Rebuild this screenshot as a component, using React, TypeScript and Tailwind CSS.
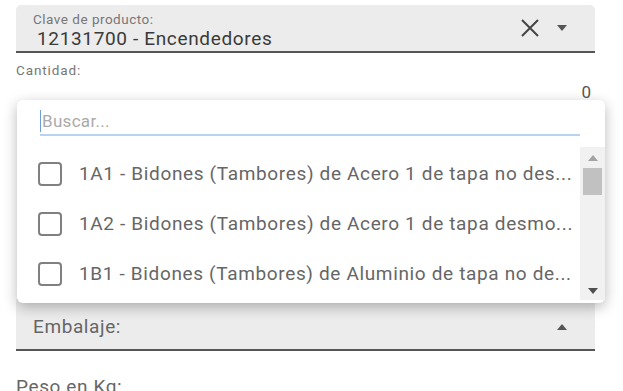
import React from 'react';

const items = [
  '1A1 - Bidones (Tambores) de Acero 1 de tapa no des...',
  '1A2 - Bidones (Tambores) de Acero 1 de tapa desmo...',
  '1B1 - Bidones (Tambores) de Aluminio de tapa no de...',
];

function Caret({ up = false }: { up?: boolean }) {
  return (
    <svg width="10" height="6" viewBox="0 0 10 6" className="block">
      {up ? <path d="M0 6 L5 0 L10 6 Z" fill="#555" /> : <path d="M0 0 L10 0 L5 6 Z" fill="#555" />}
    </svg>
  );
}

export default function App() {
  return (
    <div className="relative w-[623px] h-[391px] overflow-hidden bg-white font-['Roboto',sans-serif]">
      <div className="pl-4 pr-[28px] pt-[5px]">
        {/* Clave de producto */}
        <div className="h-[48px] bg-[#ececec] rounded-t-[5px] border-b-2 border-[#555] flex items-center pl-[17px] pr-[28px]">
          <div className="flex-1 flex flex-col pt-[5px]">
            <span className="text-[13.5px] leading-[16px] tracking-[0.5px] text-[#777]">Clave de producto:</span>
            <span className="text-[19px] leading-[22px] tracking-[0.65px] text-[#3a3a3a] pl-[4px] mt-[1px]">12131700 - Encendedores</span>
          </div>
          <svg width="20" height="20" viewBox="0 0 20 20" className="mr-[17px]">
            <path d="M2 2 L18 18 M18 2 L2 18" stroke="#444" strokeWidth="2" />
          </svg>
          <Caret />
        </div>

        {/* Cantidad */}
        <div className="pt-[10px] h-[50px]">
          <div className="text-[13.5px] leading-[14px] tracking-[0.9px] text-[#777]">Cantidad:</div>
          <div className="text-right text-[17px] leading-[22px] text-[#555] pr-[4px] mt-[4px]">0</div>
        </div>

        <div className="h-[196px]" />

        {/* Embalaje */}
        <div className="h-[52px] bg-[#ececec] border-b-2 border-[#555] flex items-center pl-[17px] pr-[28px] pt-[6px]">
          <span className="flex-1 text-[19px] leading-[22px] tracking-[0.6px] text-[#666]">Embalaje:</span>
          <Caret up />
        </div>

        <div className="pt-[25px] text-[19px] leading-[22px] tracking-[0.6px] text-[#666]">Peso en Kg:</div>
      </div>

      {/* Dropdown popup */}
      <div className="absolute left-[17px] top-[100px] w-[588px] h-[203px] bg-white rounded-[6px] shadow-[0_4px_14px_rgba(0,0,0,0.28)] flex flex-col">
        <div className="ml-[23px] mr-[25px] mt-[9px] h-[27px] border-b-2 border-[#b6d3f2] flex items-end pb-[2px]">
          <span className="w-px h-[22px] bg-[#6d9fd6] mr-[1px]" />
          <span className="text-[17px] leading-[22px] tracking-[0.3px] text-[#aaa]">Buscar...</span>
        </div>
        <div className="flex flex-1 mt-[11px] mb-[3px]">
          <div className="flex-1 flex flex-col pt-[2px]">
            {items.map((t) => (
              <div key={t} className="h-[50px] flex items-center pl-[21px]">
                <span className="w-[24px] h-[24px] border-2 border-[#808080] rounded-[4px] bg-white shrink-0" />
                <span className="ml-[17px] whitespace-nowrap text-[19px] tracking-[0.65px] text-[#666]">{t}</span>
              </div>
            ))}
          </div>
          <div className="w-[25px] bg-[#f1f1f1] flex flex-col items-center pt-[8px]">
            <svg width="10" height="6" viewBox="0 0 10 6"><path d="M0 6 L5 0 L10 6 Z" fill="#a3a3a3" /></svg>
            <div className="w-[19px] h-[27px] bg-[#c1c1c1] mt-[7px]" />
            <div className="flex-1" />
            <svg width="10" height="6" viewBox="0 0 10 6" className="mb-[6px]"><path d="M0 0 L10 0 L5 6 Z" fill="#505050" /></svg>
          </div>
        </div>
      </div>
    </div>
  );
}
